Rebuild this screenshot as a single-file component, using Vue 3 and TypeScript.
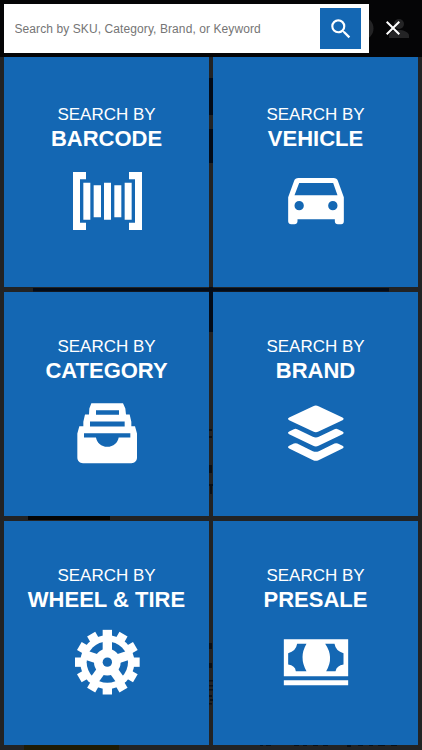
<script setup lang="ts">
import { ref } from 'vue'

type IconName = 'barcode' | 'vehicle' | 'category' | 'brand' | 'wheel' | 'presale'

interface Tile {
  icon: IconName
  title: string
  viewBox: string
}

const query = ref('')

const tiles: Tile[] = [
  { icon: 'barcode', title: 'BARCODE', viewBox: '92 209 216 216' },
  { icon: 'vehicle', title: 'VEHICLE', viewBox: '89.5 209 216 216' },
  { icon: 'category', title: 'CATEGORY', viewBox: '123 200.5 216 216' },
  { icon: 'brand', title: 'BRAND', viewBox: '89.5 200.5 216 216' },
  { icon: 'wheel', title: 'WHEEL & TIRE', viewBox: '153 197.5 216 216' },
  { icon: 'presale', title: 'PRESALE', viewBox: '89.5 197.5 216 216' },
]

const teeth = Array.from({ length: 12 }, (_, i) => i * 30)
const spokes = Array.from({ length: 5 }, (_, i) => i * 72)
</script>

<template>
  <div class="screen">
    <!-- dimmed page behind the search overlay -->
    <svg class="backdrop" viewBox="0 0 422 750" aria-hidden="true">
      <rect width="422" height="750" fill="#222324" />
      <rect width="422" height="57" fill="#050506" />
      <circle cx="362" cy="28.500" r="11.500" fill="#242425" />
      <g fill="#242425">
        <circle cx="399" cy="24" r="5" />
        <path d="M389 38v-2.500c0-3.500 6-5.500 10-5.500s10 2 10 5.500V38z" />
      </g>
      <g fill="#020b18">
        <rect x="209" y="78" width="4" height="37" />
        <rect x="209" y="129" width="4" height="34" />
        <rect x="33" y="288" width="356" height="3.500" />
        <rect x="209" y="287" width="4" height="45" />
      </g>
      <rect x="28" y="516" width="82" height="4" fill="#030405" />
      <rect x="24" y="745" width="95" height="5" fill="#1e1b05" />
      <g fill="#0b0f14">
        <path d="M209 429h3v2h-3zM209 436h3v2h-3zM209 465h3v8h-3zM209 484h4v2h-1v8h-2v-8h-1zM209 643h3v6h-3zM209 663h3v5h-3zM209 680h4v1.500h-4zM209 685h4v1.500h-4zM209 689h4v1.500h-4zM209 695h3v2h-3zM210 699h3v2h-3zM209 703h3v1.500h-3z" />
        <path d="M260 744h3v2h-3zM266 744h5v2h-5zM276 744h4v1h-4zM294 744h5v2h-5zM303 744h4v2h-4zM313 744h5v2h-5zM323 744h5v2h-5zM347 744h4v3h-4zM358 744h5v2h-5zM369 744h4v2h-4zM378 744h7v2h-7zM391 744h6v2h-6z" />
      </g>
    </svg>

    <div class="overlay">
      <header class="top">
        <form class="search" @submit.prevent>
          <input v-model="query" class="field" type="text" placeholder="Search by SKU, Category, Brand, or Keyword" />
          <button class="go" type="submit" aria-label="Search">
            <svg width="26" height="26" viewBox="0 0 24 24" fill="#fff">
              <path d="M15.500 14h-.79l-.28-.27A6.470 6.470 0 0 0 16 9.500 6.500 6.500 0 1 0 9.500 16c1.610 0 3.090-.59 4.230-1.570l.27.28v.79l5 4.990L20.490 19l-4.990-5zm-6 0C7.010 14 5 11.990 5 9.500S7.010 5 9.500 5 14 7.010 14 9.500 11.990 14 9.500 14z" />
            </svg>
          </button>
        </form>
        <button class="close" type="button" aria-label="Close">
          <svg width="24" height="24" viewBox="0 0 24 24" fill="#fff">
            <path d="M19 6.410L17.590 5 12 10.590 6.410 5 5 6.410 10.590 12 5 17.590 6.410 19 12 13.410 17.590 19 19 17.590 13.410 12z" />
          </svg>
        </button>
      </header>

      <main class="grid">
        <button v-for="tile in tiles" :key="tile.icon" class="tile" type="button">
          <span class="lead">SEARCH BY</span>
          <span class="name">{{ tile.title }}</span>
          <svg class="icon" :viewBox="tile.viewBox" aria-hidden="true">
            <g v-if="tile.icon === 'barcode'" fill="#fff">
              <path d="M98 230h39v22h-18v130h18v22H98zM305 230h-39v22h18v130h-18v22h39z" />
              <path d="M129 262h21v111h-21zM160 270h22v96h-22zM191 262h21v111h-21zM222 270h21v96h-21zM253 262h21v111h-21z" />
            </g>
            <g v-else-if="tile.icon === 'vehicle'" fill="#fff">
              <path fill-rule="evenodd" d="M145 248h105c7 0 11 3 13 8l18 50v72c0 5-3 9-8 9h-10c-5 0-9-4-9-9v-6H142v6c0 5-4 9-9 9h-10c-5 0-9-4-9-9v-72l18-50c2-5 6-8 13-8zM147 263l-14 37h129l-13-37zM147 317a14 14 0 1 0 0 28 14 14 0 0 0 0-28zM248 317a14 14 0 1 0 0 28 14 14 0 0 0 0-28z" />
            </g>
            <g v-else-if="tile.icon === 'category'">
              <path fill="#fff" d="M184 219h95l7 16 2 18h11l5 22v13h11l6 22v72c0 10-7 17-17 17H159c-10 0-17-7-17-17v-72l6-22h12v-13l5-22h12l1-18z" />
              <path class="cut" d="M198 240h69v14h-69zM180 274h104v15H180zM162 309h139v13h-35c-2 15-16 28-34 28s-32-13-34-28h-36z" />
            </g>
            <g v-else-if="tile.icon === 'brand'" fill="#fff">
              <path d="M189 228q8-4 16 0l72 34q7 4 0 8l-72 34q-8 4-16 0l-72-34q-7-4 0-8z" />
              <path d="M117 304l14-7q5-2 10 0l47 23q9 4 18 0l47-23q5-2 10 0l14 7q7 4 0 8l-72 35q-8 4-16 0l-72-35q-7-4 0-8z" />
              <path d="M117 347l14-7q5-2 10 0l47 23q9 4 18 0l47-23q5-2 10 0l14 7q7 4 0 8l-72 35q-8 4-16 0l-72-35q-7-4 0-8z" />
            </g>
            <g v-else-if="tile.icon === 'wheel'" fill="#fff">
              <rect v-for="a in teeth" :key="`t${a}`" x="248" y="209" width="28" height="30" :transform="`rotate(${a} 262 306)`" />
              <circle cx="262" cy="306" r="81" />
              <circle class="cut" cx="262" cy="306" r="62" />
              <rect v-for="a in spokes" :key="`s${a}`" x="248" y="238" width="28" height="60" :transform="`rotate(${a} 262 306)`" />
              <circle cx="262" cy="306" r="40" />
              <circle class="cut" cx="262" cy="306" r="14" />
            </g>
            <g v-else>
              <path fill="#fff" d="M101 237h193v111H101zM101 360h193v15H101z" />
              <path class="cut" d="M141 251h28q-24 41 0 82h-32q-2-17-23-20v-34q23-5 27-28zM253 251h-28q28 41 3 82h28q4-17 24-20v-34q-23-5-27-28z" />
            </g>
          </svg>
        </button>
      </main>
    </div>
  </div>
</template>

<style>
body {
  margin: 0;
  background: #222324;
}
</style>

<style scoped>
.screen {
  position: relative;
  width: 422px;
  height: 750px;
  overflow: hidden;
  font-family: "Liberation Sans", Arial, sans-serif;
}

.backdrop {
  position: absolute;
  inset: 0;
  width: 422px;
  height: 750px;
}

.overlay {
  position: relative;
  display: flex;
  flex-direction: column;
  gap: 4px;
  height: 100%;
  padding: 4px 4px 5px;
  box-sizing: border-box;
}

button {
  border: 0;
  padding: 0;
  font: inherit;
  color: #fff;
}

.top {
  display: flex;
  height: 49px;
  flex: none;
}

.search {
  display: flex;
  align-items: center;
  width: 365px;
  padding: 0 8px 0 10.5px;
  box-sizing: border-box;
  background: #fff;
}

.field {
  flex: 1;
  min-width: 0;
  padding: 0;
  border: 0;
  outline: 0;
  background: none;
  font: 12px "Liberation Sans", Arial, sans-serif;
  letter-spacing: 0.09px;
  color: #333;
}

.field::placeholder {
  color: #757575;
  opacity: 1;
}

.go {
  display: grid;
  place-items: center;
  width: 41px;
  height: 41px;
  background: #1467b3;
}

.close {
  display: grid;
  place-items: center;
  flex: 1;
  padding: 0 1px 2px 0;
  background: none;
}

.grid {
  flex: 1;
  display: grid;
  grid-template-columns: 1fr 1fr;
  grid-template-rows: 230px 224.5px 224.5px;
  column-gap: 4px;
  row-gap: 4.5px;
}

.tile {
  display: flex;
  flex-direction: column;
  align-items: center;
  justify-content: center;
  padding-bottom: 4px;
  background: #1467b3;
}

.lead {
  font-size: 17px;
  line-height: 24px;
}

.name {
  font-size: 22px;
  font-weight: 700;
  line-height: 24px;
}

.icon {
  width: 72px;
  height: 72px;
  margin-top: 14px;
}

.cut {
  fill: #1467b3;
}
</style>
